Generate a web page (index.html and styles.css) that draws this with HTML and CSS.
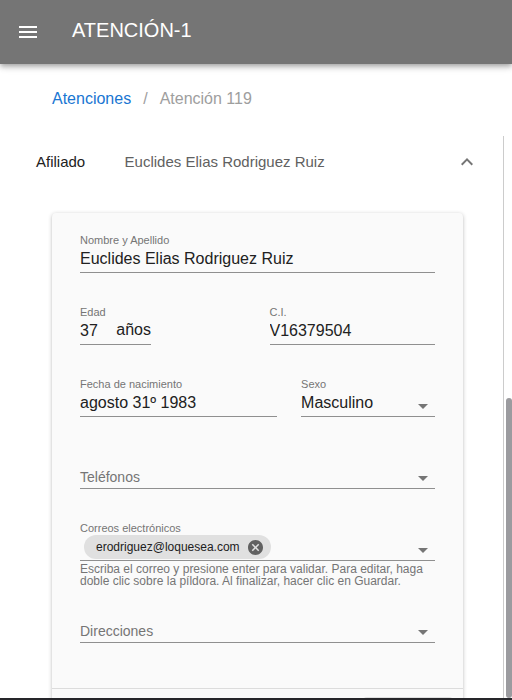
FILE: index.html
```html
<!DOCTYPE html>
<html lang="es">
<head>
<meta charset="utf-8">
<meta name="viewport" content="width=device-width, initial-scale=1">
<title>Atención-1</title>
<link rel="stylesheet" href="styles.css">
</head>
<body>
<header class="appbar">
  <button class="icon-button" type="button" aria-label="Menú">
    <svg class="icon" viewBox="0 0 24 24"><path d="M3 18h18v-2H3v2zm0-5h18v-2H3v2zm0-7v2h18V6H3z"/></svg>
  </button>
  <h1 class="title">ATENCIÓN-1</h1>
</header>

<nav class="breadcrumbs">
  <a class="crumb-link" href="#">Atenciones</a>
  <span>/</span>
  <span>Atención 119</span>
</nav>

<div class="workspace">
  <main class="panel">
    <button class="summary" type="button" aria-expanded="true">
      <span class="summary-name">Afiliado</span>
      <span class="summary-value">Euclides Elias Rodriguez Ruiz</span>
      <svg class="icon" viewBox="0 0 24 24"><path d="M12 8l-6 6 1.41 1.41L12 10.83l4.59 4.58L18 14z"/></svg>
    </button>

    <form class="card">
      <div class="fields">
        <div class="field">
          <label for="nombre">Nombre y Apellido</label>
          <div class="control"><input id="nombre" type="text" value="Euclides Elias Rodriguez Ruiz"></div>
        </div>

        <div class="field half">
          <label for="edad">Edad</label>
          <div class="control age"><input id="edad" type="text" value="37"><span>años</span></div>
        </div>
        <div class="field half">
          <label for="ci">C.I.</label>
          <div class="control"><input id="ci" type="text" value="V16379504"></div>
        </div>

        <div class="field wide">
          <label for="fecha">Fecha de nacimiento</label>
          <div class="control"><input id="fecha" type="text" value="agosto 31º 1983"></div>
        </div>
        <div class="field narrow">
          <label for="sexo">Sexo</label>
          <div class="control">
            <select id="sexo"><option>Masculino</option><option>Femenino</option></select>
            <svg class="icon arrow" viewBox="0 0 24 24"><path d="M7 12l5 5 5-5z"/></svg>
          </div>
        </div>

        <div class="field empty">
          <div class="control">
            <label for="telefonos">Teléfonos</label>
            <input id="telefonos" type="text">
            <svg class="icon arrow" viewBox="0 0 24 24"><path d="M7 12l5 5 5-5z"/></svg>
          </div>
        </div>

        <div class="field hinted">
          <label for="correos">Correos electrónicos</label>
          <div class="control">
            <span class="chip">erodriguez@loquesea.com
              <button class="chip-remove" type="button" aria-label="Quitar correo">
                <svg viewBox="2 2 20 20"><path d="M12 2C6.47 2 2 6.47 2 12s4.47 10 10 10 10-4.47 10-10S17.53 2 12 2zm5 13.59L15.59 17 12 13.41 8.41 17 7 15.59 10.59 12 7 8.41 8.41 7 12 10.59 15.59 7 17 8.41 13.41 12 17 15.59z"/></svg>
              </button>
            </span>
            <input id="correos" type="text">
            <svg class="icon arrow" viewBox="0 0 24 24"><path d="M7 12l5 5 5-5z"/></svg>
          </div>
          <p class="hint">Escriba el correo y presione enter para validar. Para editar, haga doble clic sobre la píldora. Al finalizar, hacer clic en Guardar.</p>
        </div>

        <div class="field empty">
          <div class="control">
            <label for="direcciones">Direcciones</label>
            <input id="direcciones" type="text">
            <svg class="icon arrow" viewBox="0 0 24 24"><path d="M7 12l5 5 5-5z"/></svg>
          </div>
        </div>
      </div>
      <div class="actions"><button class="save" type="button" aria-label="Guardar"></button></div>
    </form>
  </main>
  <div class="rail"><div class="rail-space"></div><div class="rail-thumb"></div></div>
</div>
<div class="bottom-edge"></div>
</body>
</html>
```
FILE: styles.css
```css
* {
  box-sizing: border-box;
}

body {
  margin: 0;
  height: 100vh;
  overflow: hidden;
  display: flex;
  flex-direction: column;
  background: #fff;
  color: #212121;
  font: 16px/20px "Liberation Sans", Arial, sans-serif;
}

button,
input,
select {
  margin: 0;
  padding: 0;
  border: 0;
  background: none;
  color: inherit;
  font: inherit;
}

.icon {
  width: 24px;
  height: 24px;
  flex: none;
  fill: #757575;
}

.appbar {
  flex: none;
  height: 64px;
  padding: 0 16px;
  display: flex;
  align-items: center;
  gap: 32px;
  background: #757575;
  color: #fff;
  box-shadow: 0 2px 4px -1px rgba(0, 0, 0, .2), 0 4px 5px rgba(0, 0, 0, .14), 0 1px 10px rgba(0, 0, 0, .12);
}

.icon-button {
  display: flex;
}

.icon-button .icon {
  fill: #fff;
}

.title {
  margin: 0;
  padding-bottom: 4px;
  font-size: 20px;
  line-height: 24px;
  font-weight: 400;
}

.breadcrumbs {
  flex: none;
  height: 72px;
  padding: 0 52px;
  display: flex;
  gap: 12px;
  color: #9e9e9e;
  line-height: 70px;
}

.crumb-link {
  color: #1976d2;
  text-decoration: none;
}

.workspace {
  flex: 1;
  min-height: 0;
  display: flex;
}

.panel {
  flex: 1;
  min-width: 0;
  overflow: hidden;
  padding: 0 24px 0 36px;
}

.summary {
  width: 100%;
  height: 52px;
  display: flex;
  align-items: center;
  font-size: 15px;
  text-align: left;
}

.summary-name {
  flex: 0 0 20%;
}

.summary-value {
  flex: 1;
  color: #616161;
}

.card {
  margin: 25px 16px 0;
  border-radius: 4px;
  background: #fafafa;
  box-shadow: 0 2px 1px -1px rgba(0, 0, 0, .2), 0 1px 1px rgba(0, 0, 0, .14), 0 1px 4px rgba(0, 0, 0, .24);
}

.fields {
  padding: 12px 28px 45px;
  display: grid;
  grid-template-columns: repeat(12, minmax(0, 1fr));
  gap: 24px;
}

.field {
  grid-column: span 12;
  min-width: 0;
  padding-top: 8px;
}

.half {
  grid-column: span 6;
}

.wide {
  grid-column: span 7;
}

.narrow {
  grid-column: span 5;
}

.field label {
  display: block;
  color: #757575;
  font-size: 11px;
  line-height: 14px;
}

.control {
  position: relative;
  height: 26px;
  display: flex;
  border-bottom: 1px solid #8f8f8f;
}

.control input,
.control select {
  flex: 1;
  min-width: 0;
  height: 24px;
  appearance: none;
  outline: none;
}

.control.age {
  width: 71px;
  line-height: 22px;
}

.empty {
  padding-top: 22px;
}

.field.empty label {
  font-size: 14px;
  line-height: 28px;
}

.arrow {
  position: absolute;
  right: 0;
  bottom: 0;
  pointer-events: none;
}

.chip {
  height: 24px;
  margin-left: 4px;
  padding: 0 8px 0 12px;
  display: flex;
  align-items: center;
  gap: 8px;
  border-radius: 12px;
  background: #e0e0e0;
  font-size: 12px;
}

.chip-remove {
  width: 15px;
  height: 15px;
  display: flex;
}

.chip-remove svg {
  width: 100%;
  fill: #616161;
}

.hinted {
  margin-bottom: -16px;
}

.hint {
  margin: 2px 0 0;
  color: #757575;
  font-size: 12px;
  line-height: 12px;
}

.actions {
  padding: 8px 10px;
  display: flex;
  justify-content: flex-end;
  border-top: 1px solid #dcdcdc;
}

.save {
  width: 90px;
  height: 36px;
  border-radius: 4px;
  background: #e0e0e0;
}

.rail {
  flex: none;
  width: 9px;
  padding-left: 2px;
  display: flex;
  flex-direction: column;
  border-left: 1px solid #ccc;
}

.rail-space {
  flex: 262;
}

.rail-thumb {
  flex: 300;
  border-radius: 3px;
  background: #9b9b9f;
}

.bottom-edge {
  flex: none;
  height: 2px;
  background: #26262a;
}
```
